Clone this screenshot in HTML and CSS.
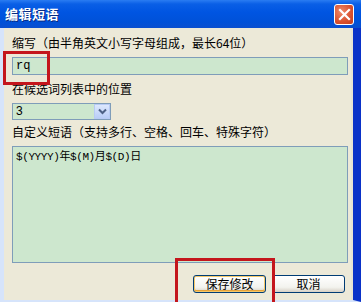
FILE: index.html
```html
<!DOCTYPE html>
<html lang="zh">
<head>
<meta charset="utf-8">
<link rel="stylesheet" href="styles.css">
</head>
<body>
<div class="window">
  <div class="titlebar">
    <span class="title">编辑短语</span>
    <span class="close">
      <svg width="13" height="13" viewBox="0 0 13 13"><path d="M2 2 L11 11 M11 2 L2 11" stroke="#fff" stroke-width="2.2" stroke-linecap="square"/></svg>
    </span>
  </div>
  <div class="frame">
    <div class="body">
      <div class="label">缩写（由半角英文小写字母组成，最长64位）</div>
      <div class="field input">rq</div>
      <div class="label">在候选词列表中的位置</div>
      <div class="field select">
        <span class="sel-val">3</span>
        <span class="sel-btn">
          <svg width="9" height="7" viewBox="0 0 9 7"><path d="M1 1.5 L4.5 5 L8 1.5" fill="none" stroke="#4d6185" stroke-width="2"/></svg>
        </span>
      </div>
      <div class="label">自定义短语（支持多行、空格、回车、特殊字符）</div>
      <div class="field area">$(YYYY)年$(M)月$(D)日</div>
      <div class="buttons">
        <span class="btn default">保存修改</span>
        <span class="btn">取消</span>
      </div>
    </div>
  </div>
  <div class="hl hl-input"></div>
  <div class="hl hl-save"></div>
</div>
</body>
</html>
```

FILE: styles.css
```css
* { box-sizing: border-box; }
html, body { margin: 0; padding: 0; }
body { width: 361px; height: 302px; overflow: hidden; background: #ece9d8; }
.window {
  position: relative;
  width: 361px;
  height: 302px;
  display: flex;
  flex-direction: column;
  font-family: "Noto Sans CJK SC", "Noto Sans", sans-serif;
  font-size: 12px;
  color: #000;
}
.titlebar {
  height: 28px;
  flex: none;
  background: linear-gradient(#2a7cf2 0px, #0a5fe6 4px, #0055e2 12px, #0051d8 22px, #0a4fcf 28px);
  display: flex;
  align-items: center;
  justify-content: space-between;
  padding: 0 7px 0 5px;
}
.title {
  color: #fff;
  font-weight: bold;
  font-size: 13px;
  letter-spacing: 0.5px;
  text-shadow: 1px 1px 0 #0a2a80;
  line-height: 16px;
}
.close {
  width: 20px;
  height: 21px;
  border: 1px solid #fff;
  border-radius: 3px;
  background: radial-gradient(circle at 35% 35%, #f08a6a, #d8502e 60%, #c43d1f);
  display: flex;
  align-items: center;
  justify-content: center;
}
.frame {
  flex: 1;
  display: flex;
  border-left: 4px solid #d6e4fb;
  border-right: 8px solid #0a32c8;
  border-bottom: 2px solid #d6e4fb;
  box-shadow: inset -2px 0 0 #e8e4d4;
}
.body {
  flex: 1;
  display: flex;
  flex-direction: column;
  padding: 8px 0 0 8px;
}
.label { line-height: 14px; height: 14px; white-space: nowrap; }
.field {
  background: #cde7ce;
  border: 1px solid #7f9db9;
}
.input {
  margin-top: 7px;
  width: 336px;
  height: 18px;
  font-family: "Liberation Mono", monospace;
  font-size: 12px;
  line-height: 16px;
  padding-left: 3px;
  margin-bottom: 7px;
}
.select {
  margin-top: 7px;
  margin-bottom: 5px;
  width: 99px;
  height: 17px;
  display: flex;
  align-items: stretch;
  justify-content: space-between;
}
.sel-val { padding-left: 3px; line-height: 15px; font-family: "Liberation Sans", sans-serif; font-size: 12px; }
.sel-btn {
  width: 16px;
  background: linear-gradient(#dde8fd, #b9cdf7);
  border: 1px solid #b8cbf4;
  display: flex;
  align-items: center;
  justify-content: center;
}
.area {
  margin-top: 7px;
  width: 336px;
  height: 117px;
  padding: 3px 0 0 3px;
  font-family: "Liberation Mono", "Noto Sans CJK SC", monospace;
  font-size: 11px;
  letter-spacing: -0.4px;
  line-height: 14px;
}
.buttons {
  margin-top: 12px;
  display: flex;
  gap: 6px;
  padding-left: 181px;
}
.btn {
  width: 73px;
  height: 18px;
  border: 1px solid #003c74;
  border-radius: 3px;
  background: linear-gradient(#ffffff, #f3f3ee 70%, #d6d0c5);
  display: flex;
  align-items: center;
  justify-content: center;
  line-height: 14px;
  font-size: 12px;
}
.btn.default {
  box-shadow: inset 0 0 0 1px #f5c86a, inset 0 -1px 0 1px #e5a33a;
}
.hl {
  position: absolute;
  border: 3px solid #c4161c;
}
.hl-input { left: 3px; top: 51px; width: 47px; height: 34px; }
.hl-save { left: 175px; top: 258px; width: 100px; height: 48px; }
```
